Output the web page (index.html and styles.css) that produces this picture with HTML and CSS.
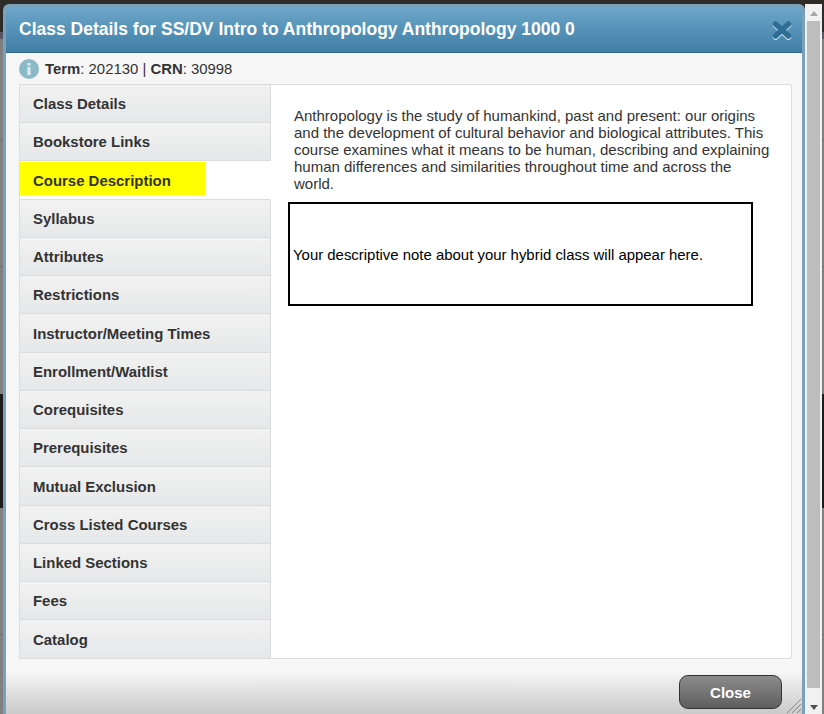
FILE: index.html
```html
<!DOCTYPE html>
<html lang="en">
<head>
<meta charset="utf-8">
<title>Class Details</title>
<link rel="stylesheet" href="styles.css">
</head>
<body>
<div class="backdrop">
  <div class="band band-top"></div>
  <div class="band band-b"></div>
  <div class="band band-c1"></div>
  <div class="band band-c2"></div>
  <div class="band band-c3"></div>
  <div class="band band-d"></div>
  <div class="band band-c4"></div>
  <div class="band band-c5"></div>
</div>
<section class="dialog">
  <header class="titlebar">
    <h1 class="title">Class Details for SS/DV Intro to Anthropology Anthropology 1000 0</h1>
    <svg class="close-x" width="22" height="22" viewBox="0 0 22 22" aria-hidden="true">
      <path d="M4.5 5 L17.5 17 M17.5 5 L4.5 17" stroke="#cfe3ef" stroke-width="5.5" stroke-linecap="round" transform="translate(0 1.2)"/>
      <path d="M4.5 5 L17.5 17 M17.5 5 L4.5 17" stroke="#2f6d97" stroke-width="5.5" stroke-linecap="round"/>
    </svg>
  </header>
  <div class="term-row">
    <svg class="info" width="20" height="20" viewBox="0 0 20 20" aria-hidden="true">
      <circle cx="10" cy="10" r="10" fill="#8cb9c7"/>
      <rect x="8.4" y="8" width="3.2" height="8" fill="#dbe9ee"/>
      <rect x="8.4" y="4" width="3.2" height="2.6" fill="#dbe9ee"/>
    </svg>
    <p class="term-text"><b>Term</b>: 202130 | <b>CRN</b>: 30998</p>
  </div>
  <div class="panel">
    <nav class="tabs">
      <a class="tab">Class Details</a>
      <a class="tab">Bookstore Links</a>
      <a class="tab active"><span class="hl">Course Description</span></a>
      <a class="tab">Syllabus</a>
      <a class="tab">Attributes</a>
      <a class="tab">Restrictions</a>
      <a class="tab">Instructor/Meeting Times</a>
      <a class="tab">Enrollment/Waitlist</a>
      <a class="tab">Corequisites</a>
      <a class="tab">Prerequisites</a>
      <a class="tab">Mutual Exclusion</a>
      <a class="tab">Cross Listed Courses</a>
      <a class="tab">Linked Sections</a>
      <a class="tab">Fees</a>
      <a class="tab">Catalog</a>
    </nav>
    <div class="content">
      <p class="desc">Anthropology is the study of humankind, past and present: our origins and the development of cultural behavior and biological attributes. This course examines what it means to be human, describing and explaining human differences and similarities throughout time and across the world.</p>
      <div class="note">Your descriptive note about your hybrid class will appear here.</div>
    </div>
  </div>
  <footer class="footer">
    <button class="close-btn">Close</button>
    <svg class="grip" width="16" height="16" viewBox="0 0 16 16" aria-hidden="true">
      <path d="M1 15 L15 1 M6 15 L15 6 M11 15 L15 11" stroke="#8a8a8a" stroke-width="1"/>
    </svg>
  </footer>
</section>
<div class="scrollbar">
  <span class="arrow-up"></span>
  <span class="thumb"></span>
  <span class="arrow-down"></span>
</div>
</body>
</html>
```
FILE: styles.css
```css
* { box-sizing: border-box; }
html, body { margin: 0; height: 714px; overflow: hidden; }
body {
  position: relative;
  width: 824px;
  background: #7f7f7f;
  font-family: "Liberation Sans", Arial, sans-serif;
}
.backdrop { position: absolute; inset: 0; display: flex; flex-direction: column; }
.band { flex: none; background: #808080; border-bottom: 1px solid #6e6e6e; }
.band-top { height: 32px; background: #2f2c28; border: 0; }
.band-b { height: 7px; background: #5a5565; border: 0; }
.band-c1 { height: 102px; }
.band-c2 { height: 126px; }
.band-c3 { height: 127px; border: 0; }
.band-d { height: 114px; background: #1d1c1c; border: 0; }
.band-c4 { height: 127px; }
.band-c5 { height: 79px; border: 0; }

.dialog {
  position: absolute;
  left: 3px;
  top: 4px;
  width: 802px;
  height: 710px;
  display: flex;
  flex-direction: column;
  background: #7ba0b9;
  border-radius: 6px 6px 0 0;
  padding: 3px 3px 0;
}
.titlebar {
  height: 46px;
  flex: none;
  display: flex;
  align-items: center;
  justify-content: space-between;
  padding: 0 9px 0 13px;
  background: linear-gradient(#6da6ca, #3f7ea6);
  border-bottom: 1px solid #2f6484;
  border-radius: 5px 5px 0 0;
}
.title {
  margin: 0;
  font-size: 17.5px;
  font-weight: bold;
  color: #fff;
}
.term-row {
  height: 31px;
  flex: none;
  display: flex;
  align-items: center;
  gap: 6px;
  padding-left: 13px;
  background: #f6f6f6;
}
.term-text { margin: 0; font-size: 14.9px; color: #333; }
.panel {
  margin: 0;
  flex: none;
  height: 575px;
  display: flex;
  background: #f6f6f6;
  padding: 0 10px 0 13px;
}
.tabs {
  width: 252px;
  flex: none;
  display: grid;
  grid-template-rows: 38px 38px 39px 38px 38px 38px 39px 38px 38px 38px 39px 38px 38px 38px 38px;
  background: #fff;
  border: 1px solid #dcdcdc;
}
.tab {
  display: flex;
  align-items: center;
  padding-left: 13px;
  font-size: 14.95px;
  font-weight: bold;
  color: #333;
  background: linear-gradient(#f2f2f2, #e6e7e8);
  border-bottom: 1px solid #dcdcdc;
}
.tab:last-child { border-bottom: 0; }
.tab.active {
  background: #fff;
  padding-left: 0;
  border-right: 1px solid #fff;
  margin-right: -1px;
  align-items: flex-start;
}
.hl {
  display: flex;
  align-items: center;
  width: 185px;
  height: 33px;
  padding: 4px 0 0 13px;
  background: #ff0;
  margin-top: 1px;
}
.content {
  flex: 1;
  min-width: 0;
  background: #fff;
  border: 1px solid #dcdcdc;
  border-left: 0;
  padding: 22px 18px 0 17px;
  border-radius: 0 3px 3px 0;
}
.desc {
  margin: 0 0 10px 6px;
  font-size: 15px;
  line-height: 17px;
  color: #333;
}
.note {
  width: 465px;
  height: 104px;
  border: 2px solid #000;
  display: flex;
  align-items: center;
  padding-left: 3px;
  font-size: 14.93px;
  color: #000;
}
.footer {
  flex: 1;
  position: relative;
  display: flex;
  justify-content: flex-end;
  align-items: flex-start;
  padding: 16px 20px 0 0;
  background: linear-gradient(#f7f7f7 20%, #cacaca);
}
.close-btn {
  width: 103px;
  height: 34px;
  border: 1px solid #333;
  border-radius: 9px;
  background: linear-gradient(#8c8c8c, #5e5e5e);
  color: #fff;
  font: bold 15px "Liberation Sans", Arial, sans-serif;
}
.grip { position: absolute; right: 0; bottom: 0; }
.scrollbar {
  position: absolute;
  left: 805px;
  top: 4px;
  width: 17px;
  height: 710px;
  background: #f1f1f1;
  display: flex;
  flex-direction: column;
  align-items: center;
}
.arrow-up {
  flex: none;
  margin-top: 7px;
  border: 4px solid transparent;
  border-top: 0;
  border-bottom: 5px solid #a6a6a6;
  width: 0;
}
.thumb { flex: 1; width: 13px; margin: 5px 0 17px; background: #bdbdbd; }
.arrow-down {
  flex: none;
  margin-bottom: 4px;
  border: 4px solid transparent;
  border-bottom: 0;
  border-top: 5px solid #505050;
  width: 0;
}
```
